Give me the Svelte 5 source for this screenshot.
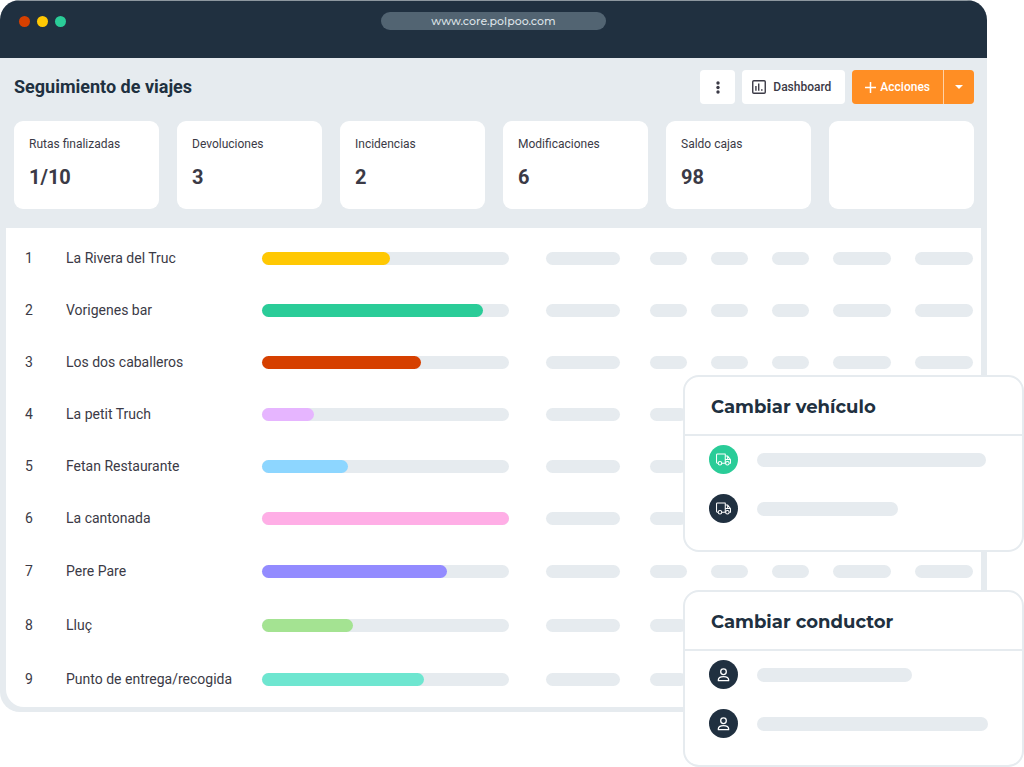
<script lang="ts">
  interface Stat {
    label: string;
    value: string;
  }

  interface Trip {
    name: string;
    progress: number;
    color: string;
  }

  interface Panel {
    title: string;
    icon: "truck" | "user";
    items: { width: number; active?: boolean }[];
  }

  const stats: Stat[] = [
    { label: "Rutas finalizadas", value: "1/10" },
    { label: "Devoluciones", value: "3" },
    { label: "Incidencias", value: "2" },
    { label: "Modificaciones", value: "6" },
    { label: "Saldo cajas", value: "98" },
    { label: "", value: "" },
  ];

  const trips: Trip[] = [
    { name: "La Rivera del Truc", progress: 52, color: "#ffc803" },
    { name: "Vorigenes bar", progress: 89.5, color: "#2acc98" },
    { name: "Los dos caballeros", progress: 64.5, color: "#d64000" },
    { name: "La petit Truch", progress: 21, color: "#e6b5ff" },
    { name: "Fetan Restaurante", progress: 35, color: "#8dd6ff" },
    { name: "La cantonada", progress: 100, color: "#ffaee6" },
    { name: "Pere Pare", progress: 75, color: "#938bff" },
    { name: "Lluç", progress: 37, color: "#a4e392" },
    { name: "Punto de entrega/recogida", progress: 65.5, color: "#6ee6d0" },
  ];

  // Relative column widths: index, name, progress, then the placeholders
  const columns = [60, 196, 284, 104, 61, 61, 61, 82, 66];
  const placeholders = columns.slice(3);

  const panels: Panel[] = [
    {
      title: "Cambiar vehículo",
      icon: "truck",
      items: [{ width: 99, active: true }, { width: 61 }],
    },
    {
      title: "Cambiar conductor",
      icon: "user",
      items: [{ width: 67 }, { width: 100 }],
    },
  ];
</script>

<div class="stage">
  <div class="window">
    <header class="titlebar">
      <div class="dots">
        <span class="dot dot--red"></span>
        <span class="dot dot--yellow"></span>
        <span class="dot dot--green"></span>
      </div>
      <input class="address" type="text" aria-label="URL" value="www.core.polpoo.com" readonly />
    </header>

    <main class="content">
      <div class="toolbar">
        <h1>Seguimiento de viajes</h1>
        <div class="actions">
          <button class="btn btn--icon" aria-label="Más opciones">
            <svg width="4" height="13" viewBox="0 0 4 13" fill="currentColor">
              <circle cx="2" cy="2" r="1.7" />
              <circle cx="2" cy="6.5" r="1.7" />
              <circle cx="2" cy="11" r="1.7" />
            </svg>
          </button>
          <button class="btn">
            <svg width="14" height="14" viewBox="0 0 15 15" fill="none" stroke="currentColor">
              <rect x="0.8" y="0.8" width="13.4" height="13.4" rx="1.2" stroke-width="1.5" />
              <path d="M4.2 6.5V11.5M7.2 3.8V11.5" stroke-width="1.5" />
              <path d="M10.5 9.8V11.5" stroke-width="1.6" />
            </svg>
            Dashboard
          </button>
          <div class="split">
            <button class="btn btn--primary">
              <svg width="11" height="11" viewBox="0 0 11 11" stroke="currentColor" stroke-width="1.5">
                <path d="M5.5 0V11M0 5.5H11" />
              </svg>
              Acciones
            </button>
            <button class="btn btn--primary btn--caret" aria-label="Más acciones">
              <svg width="8" height="4" viewBox="0 0 8 4" fill="currentColor">
                <path d="M0 0H8L4 4Z" />
              </svg>
            </button>
          </div>
        </div>
      </div>

      <div class="stats">
        {#each stats as stat}
          <div class="stat">
            <span class="stat-label">{stat.label}</span>
            <strong class="stat-value">{stat.value}</strong>
          </div>
        {/each}
      </div>

      <div class="trips">
        <table>
          <colgroup>
            {#each columns as width}
              <col style="width: {width}px" />
            {/each}
          </colgroup>
          <tbody>
            {#each trips as trip, i}
              <tr>
                <td class="index">{i + 1}</td>
                <td class="name">{trip.name}</td>
                <td class="progress-cell">
                  <div
                    class="bar"
                    role="progressbar"
                    aria-label={trip.name}
                    aria-valuemin="0"
                    aria-valuemax="100"
                    aria-valuenow={trip.progress}
                  >
                    <div class="bar-fill" style="width: {trip.progress}%; background: {trip.color}"></div>
                  </div>
                </td>
                {#each placeholders as _}
                  <td class="placeholder"><div class="bar"></div></td>
                {/each}
              </tr>
            {/each}
          </tbody>
        </table>
      </div>
    </main>
  </div>

  <aside class="panels">
    {#each panels as panel}
      <section class="panel">
        <h2>{panel.title}</h2>
        <ul>
          {#each panel.items as item}
            <li>
              <span class="avatar" class:active={item.active}>
                {#if panel.icon === "truck"}
                  <svg width="17" height="13" viewBox="0 0 17 14" fill="none" stroke="currentColor" stroke-width="1.1" stroke-linejoin="round">
                    <path d="M2.7 11H1.9A1 1 0 0 1 1 10V2A1 1 0 0 1 2 1H10.4V11H6.6" />
                    <path d="M10.4 3.3H13L16 7V11H14.7M10.4 7H16M13 3.5V7" />
                    <circle cx="4.7" cy="11.1" r="1.9" />
                    <circle cx="12.7" cy="11.1" r="1.9" />
                  </svg>
                {:else}
                  <svg width="13" height="14" viewBox="0 0 13 15" fill="none" stroke="currentColor" stroke-width="1.4" stroke-linejoin="round">
                    <circle cx="6.5" cy="4" r="3" />
                    <path d="M1 13.6V12.6C1 10.4 3 9.2 6.5 9.2S12 10.4 12 12.6V13.6Z" />
                  </svg>
                {/if}
              </span>
              <div class="track">
                <div class="line" style="width: {item.width}%"></div>
              </div>
            </li>
          {/each}
        </ul>
      </section>
    {/each}
  </aside>
</div>

<style>
  :global(body) {
    margin: 0;
    background: #fff;
  }

  .stage {
    --navy: #203040;
    --mist: #e6ebef;
    --ink: #3b3a46;
    --orange: #ff8e24;

    position: relative;
    box-sizing: border-box;
    min-height: 100vh;
    padding-right: 37px;
    font-family: Roboto, "Liberation Sans", sans-serif;
    color: var(--ink);
  }

  .window {
    background: var(--mist);
    border-radius: 20px;
    overflow: hidden;
  }

  .titlebar {
    display: grid;
    grid-template-columns: 1fr 225px 1fr;
    align-items: start;
    box-sizing: border-box;
    height: 58px;
    padding: 11px 19px 0;
    background: var(--navy);
    border-top: 1px solid #8d979f;
  }

  .dots {
    display: flex;
    align-items: center;
    gap: 7px;
    height: 18px;
  }

  .dot {
    width: 11px;
    height: 11px;
    border-radius: 50%;
  }

  .dot--red {
    background: #d64000;
  }

  .dot--yellow {
    background: #ffc803;
  }

  .dot--green {
    background: #2acc98;
  }

  .address {
    box-sizing: border-box;
    width: 100%;
    height: 18px;
    padding: 0 10px;
    border: 0;
    border-radius: 9px;
    outline: none;
    background: #526472;
    color: #dce2e7;
    font: 500 11px/18px Montserrat, Inter, sans-serif;
    text-align: center;
  }

  .toolbar {
    display: flex;
    align-items: center;
    justify-content: space-between;
    padding: 12px 13px 17px 14px;
  }

  h1 {
    margin: 0;
    font-size: 18px;
    line-height: 24px;
    font-weight: 700;
    color: var(--navy);
  }

  .actions {
    display: flex;
    gap: 7px;
  }

  .btn {
    display: flex;
    align-items: center;
    justify-content: center;
    gap: 7px;
    height: 34px;
    padding: 0 14px 0 10px;
    border: 0;
    border-radius: 4px;
    background: #fff;
    color: var(--ink);
    font: 500 12px/16px Roboto, "Liberation Sans", sans-serif;
    cursor: pointer;
  }

  .btn--icon {
    width: 35px;
    padding: 0;
  }

  .split {
    display: flex;
    gap: 1px;
    border-radius: 4px;
    overflow: hidden;
    background: #ffd2a6;
  }

  .btn--primary {
    gap: 4px;
    padding: 0 13px;
    border-radius: 0;
    background: var(--orange);
    color: #fff;
  }

  .btn--caret {
    width: 30px;
    padding: 0;
  }

  .stats {
    display: grid;
    grid-template-columns: repeat(6, 1fr);
    gap: 18px;
    padding: 0 13px 19px 14px;
  }

  .stat {
    display: flex;
    flex-direction: column;
    gap: 13px;
    box-sizing: border-box;
    height: 88px;
    padding: 15px;
    border-radius: 9px;
    background: #fff;
  }

  .stat-label {
    font-size: 12px;
    line-height: 16px;
  }

  .stat-value {
    font-size: 20px;
    line-height: 24px;
    font-weight: 700;
  }

  .trips {
    margin: 0 6px;
    padding: 4px 0 1px;
    background: #fff;
    border-radius: 0 0 18px 18px;
  }

  .content {
    padding-bottom: 5px;
  }

  table {
    width: 100%;
    table-layout: fixed;
    border-collapse: collapse;
  }

  td {
    height: 52px;
    padding: 0;
    font-size: 14px;
    line-height: 20px;
    vertical-align: middle;
    white-space: nowrap;
  }

  tr:nth-child(n + 7) td {
    height: 54px;
  }

  .index {
    padding-left: 19px;
  }

  .progress-cell {
    padding-right: 37px;
  }

  .placeholder {
    padding-right: 24px;
  }

  .placeholder:nth-child(4) {
    padding-right: 30px;
  }

  .placeholder:last-child {
    padding-right: 8px;
  }

  .bar {
    height: 13px;
    border-radius: 7px;
    background: var(--mist);
  }

  .bar-fill {
    height: 100%;
    border-radius: 7px;
  }

  .panels {
    position: absolute;
    top: 375px;
    right: 0;
    display: flex;
    flex-direction: column;
    gap: 38px;
    width: 341px;
  }

  .panel {
    border: 2px solid var(--mist);
    border-radius: 16px;
    background: #fff;
  }

  h2 {
    margin: 0;
    padding: 18px 26px 15px;
    border-bottom: 2px solid var(--mist);
    font: 700 18px/24px Montserrat, Inter, sans-serif;
    color: var(--navy);
  }

  ul {
    display: flex;
    flex-direction: column;
    gap: 20px;
    margin: 0;
    padding: 9px 34px 27px 24px;
    list-style: none;
  }

  li {
    display: flex;
    align-items: center;
    gap: 19px;
  }

  .avatar {
    display: flex;
    align-items: center;
    justify-content: center;
    flex-shrink: 0;
    width: 29px;
    height: 29px;
    border-radius: 50%;
    background: var(--navy);
    color: #fff;
  }

  .avatar.active {
    background: #2acc98;
  }

  .track {
    flex: 1;
  }

  .line {
    height: 14px;
    border-radius: 7px;
    background: var(--mist);
  }
</style>
